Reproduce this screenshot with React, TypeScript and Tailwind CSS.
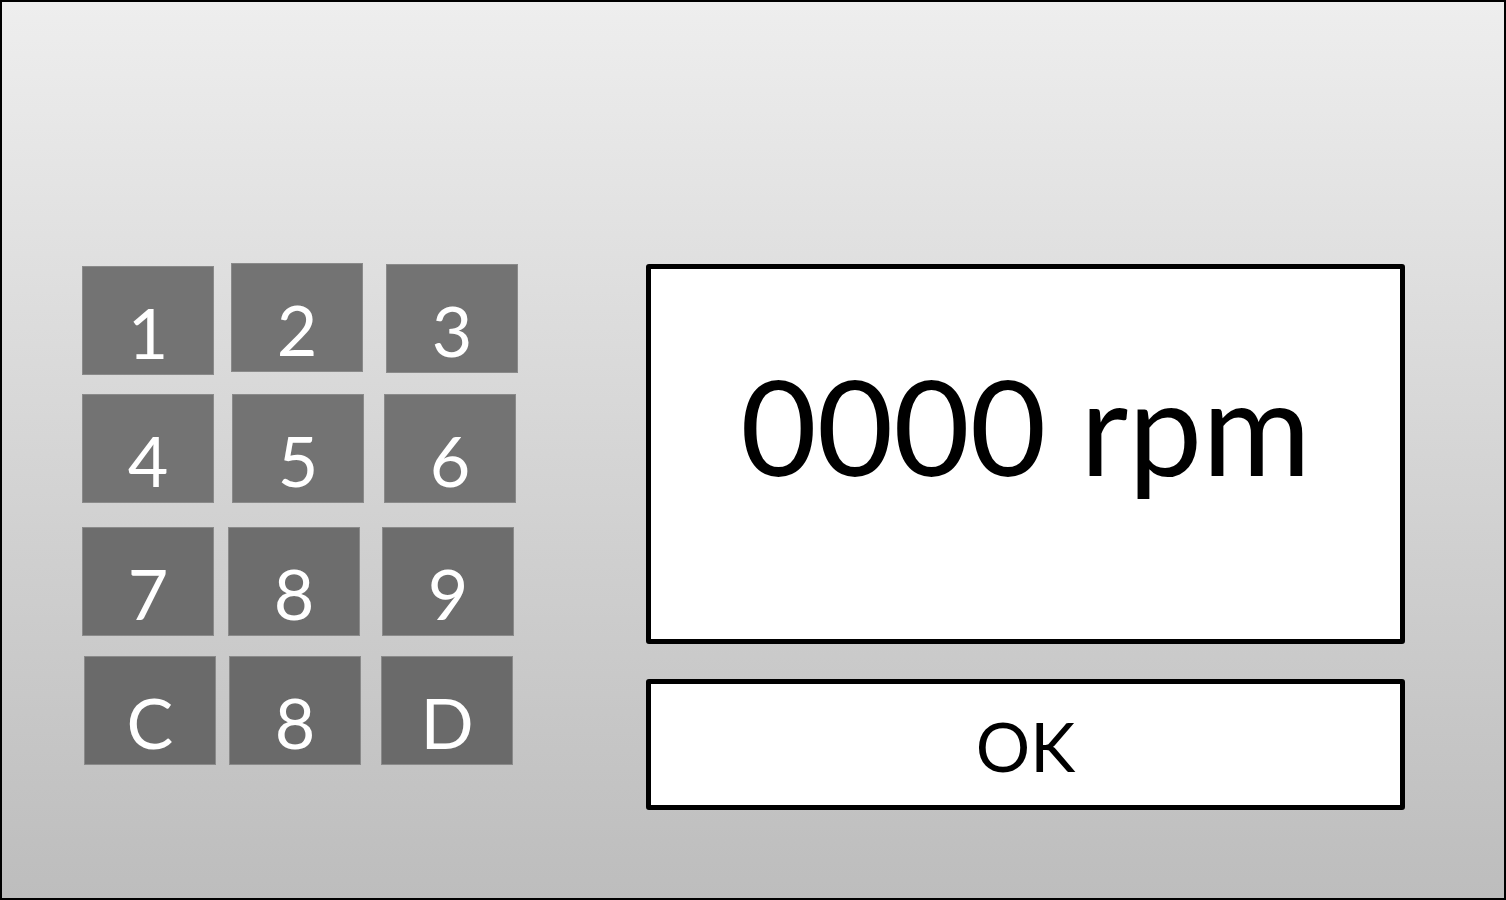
import React from 'react';

interface Key {
  label: string;
  cls: string;
}

// offsets are copied off the mockup, the keys aren't perfectly aligned
const ROWS: { cls: string; keys: Key[] }[] = [
  {
    cls: 'mt-0',
    keys: [
      { label: '1', cls: 'ml-0 mt-[3px] bg-[#737373]' },
      { label: '2', cls: 'ml-[17px] mt-0 bg-[#737373]' },
      { label: '3', cls: 'ml-[23px] mt-[1px] bg-[#737373]' },
    ],
  },
  {
    cls: 'mt-[19px]',
    keys: [
      { label: '4', cls: 'ml-0 bg-[#737373]' },
      { label: '5', cls: 'ml-[18px] bg-[#737373]' },
      { label: '6', cls: 'ml-[20px] bg-[#737373]' },
    ],
  },
  {
    cls: 'mt-[24px]',
    keys: [
      { label: '7', cls: 'ml-0 bg-[#6d6d6d]' },
      { label: '8', cls: 'ml-[14px] bg-[#6d6d6d]' },
      { label: '9', cls: 'ml-[22px] bg-[#6d6d6d]' },
    ],
  },
  {
    cls: 'mt-[20px]',
    keys: [
      { label: 'C', cls: 'ml-[2px] bg-[#6a6a6a]' },
      { label: '8', cls: 'ml-[13px] bg-[#6a6a6a]' },
      { label: 'D', cls: 'ml-[20px] bg-[#6a6a6a]' },
    ],
  },
];

const App: React.FC = () => {
  return (
    <div
      className="w-[1506px] h-[900px] border-2 border-black bg-gradient-to-b from-[#eeeeee] to-[#bdbdbd] flex pl-[80px] overflow-hidden"
      style={{ fontFamily: 'Lato, "Open Sans", sans-serif' }}
    >
      {/* Keypad */}
      <div className="w-[436px] pt-[261px] flex flex-col">
        {ROWS.map((row, r) => (
          <div key={r} className={`flex items-start ${row.cls}`}>
            {row.keys.map((k, i) => (
              <button
                key={i}
                className={`w-[132px] h-[109px] border border-[#8a8a8a] text-white text-[70px] leading-none text-center pt-[22px] block ${k.cls}`}
              >
                {k.label}
              </button>
            ))}
          </div>
        ))}
      </div>

      {/* Display + OK */}
      <div className="ml-[128px] pt-[262px] flex flex-col">
        <div className="w-[759px] h-[380px] border-[5px] border-black rounded-[3px] bg-white text-black text-center text-[132px] leading-none pt-[90px]">
          0000 rpm
        </div>
        <button className="mt-[35px] w-[759px] h-[131px] border-[5px] border-black rounded-[3px] bg-white text-black text-[68px] leading-none flex items-center justify-center pt-[2px]">
          OK
        </button>
      </div>
    </div>
  );
};

export default App;
